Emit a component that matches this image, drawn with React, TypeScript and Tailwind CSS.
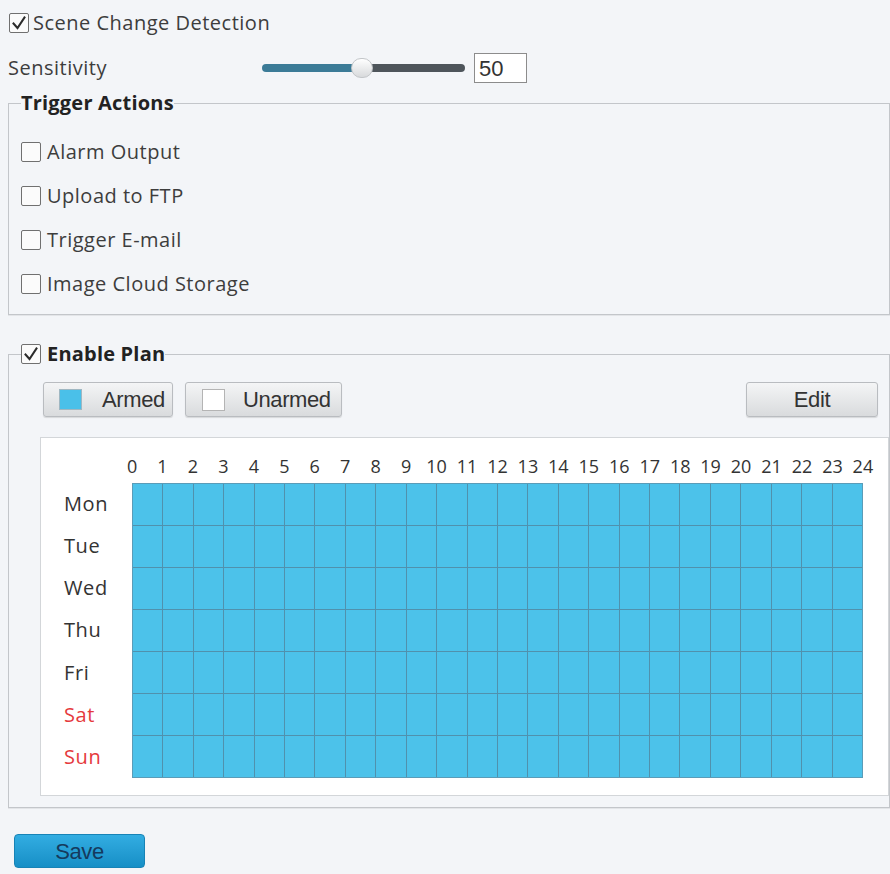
import { Fragment } from "react";

const ACTIONS = ["Alarm Output", "Upload to FTP", "Trigger E-mail", "Image Cloud Storage"];
const DAYS = ["Mon", "Tue", "Wed", "Thu", "Fri", "Sat", "Sun"];
const HOURS = Array.from({ length: 25 }, (_, i) => i);

function Box({ checked = false }: { checked?: boolean }) {
  return (
    <span className="flex h-[20px] w-[20px] shrink-0 items-center justify-center rounded-[2px] border border-[#707070] bg-[#fbfbfb]">
      {checked && (
        <svg width="16" height="16" viewBox="0 0 16 16" fill="none">
          <path d="M2.5 8.5 L6.5 13 L13.5 2.5" stroke="#2b2b2b" strokeWidth="2" strokeLinecap="square" />
        </svg>
      )}
    </span>
  );
}

function Button({ children, className = "" }: { children: React.ReactNode; className?: string }) {
  return (
    <button
      className={`flex h-[35px] items-center rounded-[3px] border border-[#b9bcc0] bg-gradient-to-b from-[#f4f5f6] to-[#d9dbdd] font-['Liberation_Sans',Arial,sans-serif] text-[22px] tracking-[-0.4px] text-[#333] shadow-[0_1px_1px_rgba(0,0,0,0.12)] ${className}`}
    >
      {children}
    </button>
  );
}

export default function App() {
  return (
    <div className="h-[874px] w-[890px] overflow-hidden bg-[#f3f5f8] pt-[13px] font-['Open_Sans',sans-serif] text-[20px] tracking-[0.5px] text-[#3d3d3d]">
      {/* enable */}
      <label className="flex h-[20px] items-center gap-[4px] pl-[9px]">
        <Box checked />
        <span>Scene Change Detection</span>
      </label>

      {/* sensitivity */}
      <div className="mt-[20px] flex h-[30px] items-center pl-[8px]">
        <span className="w-[254px]">Sensitivity</span>
        <div className="relative flex h-[8px] w-[203px]">
          <div className="h-full w-[100px] rounded-l-full bg-[#3b7b97]" />
          <div className="h-full flex-1 rounded-r-full bg-[#4e555b]" />
          <span className="absolute left-[89px] top-[-6px] h-[20px] w-[22px] rounded-full border border-[#c3c6c9] bg-gradient-to-b from-white to-[#d8dadc]" />
        </div>
        <div className="ml-[9px] flex h-[30px] w-[53px] items-center border border-[#8c8c8c] bg-white pl-[4px] font-['Liberation_Sans',Arial,sans-serif] text-[22px] tracking-normal text-[#333]">
          50
        </div>
      </div>

      {/* trigger actions */}
      <fieldset className="ml-[8px] mt-[7px] w-[882px] border border-[#c3c6ca] pb-[8px] pl-[12px] shadow-[0_1px_0_#e3e5e8]">
        <legend className="h-[26px] text-[20px] font-bold leading-[26px] tracking-[0.2px] text-[#222]">Trigger Actions</legend>
        <div className="flex flex-col pt-[14px]">
          {ACTIONS.map((a) => (
            <label key={a} className="flex h-[44px] items-center gap-[6px]">
              <Box />
              <span>{a}</span>
            </label>
          ))}
        </div>
      </fieldset>

      {/* plan */}
      <fieldset className="ml-[8px] mt-[26px] w-[882px] border border-[#c3c6ca] pb-[11px] pl-[12px] shadow-[0_1px_0_#e3e5e8]">
        <legend className="flex h-[26px] items-center gap-[6px] leading-[26px]">
          <Box checked />
          <span className="font-bold tracking-[0.2px] text-[#222]">Enable Plan</span>
        </legend>

        <div className="flex items-center justify-between pl-[22px] pr-[11px] pt-[15px]">
          <div className="flex gap-[12px]">
            <Button className="w-[130px] pl-[15px]">
              <span className="h-[21px] w-[23px] border border-[#9fb7c2] bg-[#4ac0e9]" />
              <span className="ml-[20px]">Armed</span>
            </Button>
            <Button className="w-[157px] pl-[16px]">
              <span className="h-[22px] w-[23px] border border-[#b4b4b4] bg-white" />
              <span className="ml-[18px]">Unarmed</span>
            </Button>
          </div>
          <Button className="w-[132px] justify-center">Edit</Button>
        </div>

        <div className="ml-[19px] mt-[20px] h-[359px] border border-[#d3d6d9] bg-white pl-[23px] pt-[16px]">
          <div className="ml-[52.8px] flex h-[24px] items-center text-[18px] leading-[24px] tracking-normal text-[#333]">
            {HOURS.map((h) => (
              <span key={h} className="w-[30.46px] shrink-0 text-center">
                {h}
              </span>
            ))}
          </div>

          <div className="mt-[5px] flex">
            <div className="flex w-[68px] flex-col text-[20px] tracking-[0.6px]">
              {DAYS.map((d, i) => (
                <span
                  key={d}
                  className={`flex h-[42.14px] items-center ${i > 4 ? "text-[#e53a3d]" : "text-[#333]"}`}
                >
                  {d}
                </span>
              ))}
            </div>
            <div className="grid h-[295px] w-[731px] grid-cols-[repeat(24,minmax(0,1fr))] grid-rows-[repeat(7,minmax(0,1fr))] gap-px border border-[#5a9cb8] bg-[#5091ad]">
              {DAYS.map((d) => (
                <Fragment key={d}>
                  {Array.from({ length: 24 }, (_, h) => (
                    <div key={h} className="bg-[#4cc2ea]" />
                  ))}
                </Fragment>
              ))}
            </div>
          </div>
        </div>
      </fieldset>

      <button className="ml-[14px] mt-[26px] flex h-[34px] w-[131px] items-center justify-center rounded-[4px] border border-[#1783b6] bg-gradient-to-b from-[#32ade2] to-[#168fc6] font-['Liberation_Sans',Arial,sans-serif] text-[22px] tracking-[-0.4px] text-[#153a5d]">
        Save
      </button>
    </div>
  );
}
